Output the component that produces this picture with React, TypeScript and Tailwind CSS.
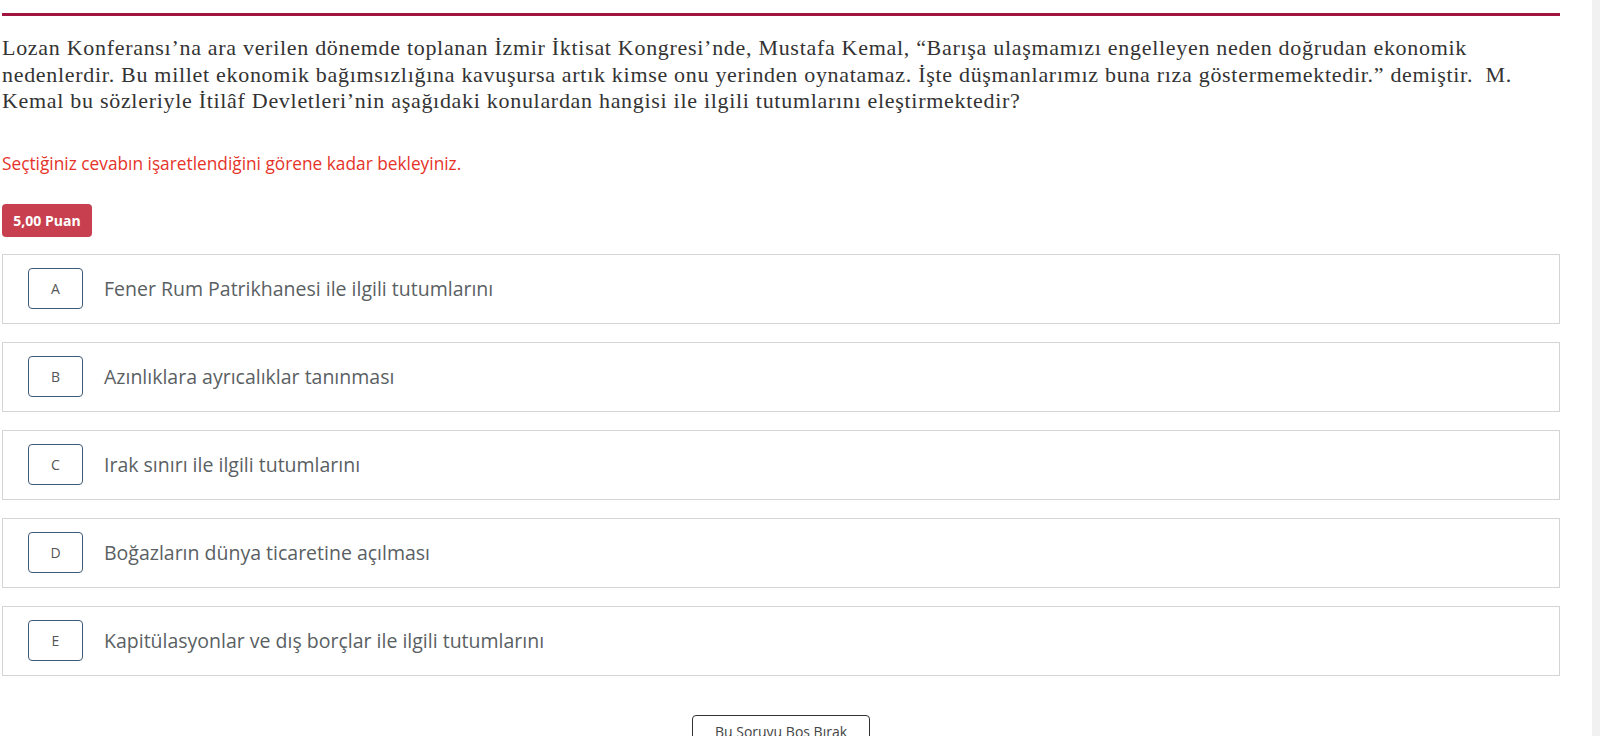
import React from "react";

const options = [
  { key: "A", text: "Fener Rum Patrikhanesi ile ilgili tutumlarını" },
  { key: "B", text: "Azınlıklara ayrıcalıklar tanınması" },
  { key: "C", text: "Irak sınırı ile ilgili tutumlarını" },
  { key: "D", text: "Boğazların dünya ticaretine açılması" },
  { key: "E", text: "Kapitülasyonlar ve dış borçlar ile ilgili tutumlarını" },
];

export default function App() {
  return (
    <div className="flex h-screen overflow-hidden bg-white">
      <main className="flex-1 pl-[2px] pr-[32px] pt-[13px]">
        <div className="h-[3px] bg-[#a0153e]" />

        {/* Soru metni */}
        <p className="mt-[19px] text-[22px] leading-[26.5px] tracking-[0.7px] text-[#333] font-['Liberation_Serif',serif]">
          Lozan Konferansı’na ara verilen dönemde toplanan İzmir İktisat Kongresi’nde, Mustafa Kemal, “Barışa ulaşmamızı engelleyen neden doğrudan ekonomik nedenlerdir. Bu millet ekonomik bağımsızlığına kavuşursa artık kimse onu yerinden oynatamaz. İşte düşmanlarımız buna rıza göstermemektedir.” demiştir.&nbsp; M. Kemal bu sözleriyle İtilâf Devletleri’nin aşağıdaki konulardan hangisi ile ilgili tutumlarını eleştirmektedir?
        </p>

        <div className="font-['Open_Sans',sans-serif]">
          <p className="mt-[39px] text-[17.3px] leading-5 text-[#e5332a]">
            Seçtiğiniz cevabın işaretlendiğini görene kadar bekleyiniz.
          </p>

          <span className="mt-[30px] inline-flex h-[33px] w-[90px] items-center justify-center rounded-[4px] bg-[#c8404f] text-[14px] font-bold text-white">
            5,00 Puan
          </span>

          <div className="mt-[17px] flex flex-col gap-[18px]">
            {options.map((o) => (
              <button
                key={o.key}
                className="flex h-[70px] items-center border border-[#d4d4d4] bg-white pl-[25px] text-left"
              >
                <span className="flex h-[41px] w-[55px] items-center justify-center rounded-[4px] border border-[#3e5a78] text-[14px] text-[#555]">
                  {o.key}
                </span>
                <span className="ml-[21px] text-[19.5px] text-[#5a5f63]">{o.text}</span>
              </button>
            ))}
          </div>

          <div className="mt-[39px] flex justify-center">
            <button className="h-[40px] w-[178px] rounded-[4px] border border-[#333] bg-white pb-[6px] text-[14px] text-[#444]">
              Bu Soruyu Boş Bırak
            </button>
          </div>
        </div>
      </main>
      <div className="w-2 shrink-0 bg-[#f1f1f1]" />
    </div>
  );
}
